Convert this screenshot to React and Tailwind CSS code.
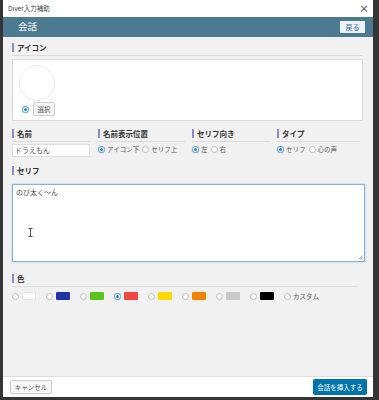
import React from 'react';

const FONT = { fontFamily: '"Noto Sans CJK JP", "Noto Sans", sans-serif' };

const Label = ({ children, className = '' }) => (
    <div className={`border-b border-[#dcdcdc] pb-[3px] ${className}`}>
        <div className="flex items-center gap-[3px] text-[7.5px] font-bold leading-none text-[#333]">
            <span className="block h-[9px] w-[2px] bg-[#8c8cc4]" />
            <span>{children}</span>
        </div>
    </div>
);

const Radio = ({ checked = false }) => (
    <span className={`flex h-[7px] w-[7px] shrink-0 items-center justify-center rounded-full border bg-white ${checked ? 'border-[#7aa7c7] shadow-[0_0_1px_#5b9dd9]' : 'border-[#bbb]'}`}>
        {checked && <span className="block h-[3px] w-[3px] rounded-full bg-[#1e8cbe]" />}
    </span>
);

const RadioText = ({ checked, children }) => (
    <span className="flex items-center gap-[2px] whitespace-nowrap">
        <Radio checked={checked} />
        <span className="text-[6.5px] leading-none text-[#555]">{children}</span>
    </span>
);

const SWATCHES = [
    { c: 'bg-white border border-[#e3e3e3]' },
    { c: 'bg-[#1d35a6]' },
    { c: 'bg-[#5bc21a]' },
    { c: 'bg-[#f0463c]', checked: true },
    { c: 'bg-[#ffd800]' },
    { c: 'bg-[#f18200]' },
    { c: 'bg-[#c9c9c9]' },
    { c: 'bg-black' },
];

export default function App() {
    return (
        <div className="flex h-[400px] w-[379px] bg-[#353535] pb-[3px] pl-[3px] pr-[6px]" style={FONT}>
            <div className="flex flex-1 flex-col overflow-hidden bg-[#f1f1f1]">
                {/* title bar */}
                <div className="flex h-[17px] shrink-0 items-center justify-between bg-white pl-[5px] pr-[4px]">
                    <span className="text-[6.5px] leading-none text-[#444]">Diver入力補助</span>
                    <span className="text-[10px] font-bold leading-none text-[#666]">×</span>
                </div>
                {/* header */}
                <div className="flex h-[20px] shrink-0 items-center justify-between bg-[#4b7a91] pl-[15px] pr-[8px]">
                    <span className="text-[9.5px] leading-none text-white">会話</span>
                    <span className="flex h-[12px] w-[25px] items-center justify-center bg-[#eef2f5] text-[7px] leading-none text-[#2f6e98]">戻る</span>
                </div>

                {/* content */}
                <div className="flex flex-1 flex-col pl-[9px] pr-[8px] pt-[6px]">
                    <Label className="mr-[2px]">アイコン</Label>
                    <div className="mr-[2px] mt-[3px] flex h-[62px] flex-col border border-[#dcdcdc] bg-white pl-[6px] pt-[5px]">
                        <div className="h-[36px] w-[36px] rounded-full border border-[#e8e8e8]" />
                        <div className="mt-[1px] flex items-center gap-[4px] pl-[3px]">
                            <Radio checked />
                            <span className="flex h-[14px] w-[22px] items-center justify-center rounded-[2px] border border-[#ccc] bg-[#f7f7f7] text-[6.5px] leading-none text-[#555]">選択</span>
                        </div>
                    </div>

                    <div className="mt-[8px] grid grid-cols-[79px_87px_78px_1fr] gap-x-[7px] pr-[5px]">
                        <div>
                            <Label>名前</Label>
                            <div className="mt-[2px] flex h-[13px] w-[78px] items-center border border-[#ddd] bg-white pl-[2px] text-[7px] leading-none text-[#555]">ドラえもん</div>
                        </div>
                        <div>
                            <Label>名前表示位置</Label>
                            <div className="mt-[4px] flex items-center gap-[3px]">
                                <RadioText checked>アイコン下</RadioText>
                                <RadioText>セリフ上</RadioText>
                            </div>
                        </div>
                        <div>
                            <Label>セリフ向き</Label>
                            <div className="mt-[4px] flex items-center gap-[3px]">
                                <RadioText checked>左</RadioText>
                                <RadioText>右</RadioText>
                            </div>
                        </div>
                        <div>
                            <Label>タイプ</Label>
                            <div className="mt-[4px] flex items-center gap-[3px]">
                                <RadioText checked>セリフ</RadioText>
                                <RadioText>心の声</RadioText>
                            </div>
                        </div>
                    </div>

                    <Label className="mt-[9px] border-b-0 pb-0">セリフ</Label>
                    <div className="relative mt-[6px] h-[78px] border border-[#86b3d3] bg-white px-[3px] pt-[3px] shadow-[0_0_2px_#a9cde6]">
                        <span className="block text-[7px] leading-[9px] text-[#444]">のび太く〜ん</span>
                        <svg className="absolute left-[15px] top-[43px]" width="5" height="9" viewBox="0 0 5 9">
                            <path d="M0.5 0.5h4M2.5 0.5v8M0.5 8.5h4" stroke="#555" strokeWidth="1" fill="none" />
                        </svg>
                        <svg className="absolute bottom-[1px] right-[1px]" width="5" height="5" viewBox="0 0 5 5">
                            <path d="M4.5 0.5L0.5 4.5M4.5 2.5L2.5 4.5" stroke="#999" strokeWidth="0.8" />
                        </svg>
                    </div>

                    <Label className="mr-[8px] mt-[12px]">色</Label>
                    <div className="mt-[5px] flex items-center">
                        {SWATCHES.map((s, i) => (
                            <span key={i} className="mr-[10px] flex items-center gap-[3px]">
                                <Radio checked={s.checked} />
                                <span className={`block h-[8px] w-[14px] rounded-[1px] ${s.c}`} />
                            </span>
                        ))}
                        <RadioText>カスタム</RadioText>
                    </div>
                </div>

                {/* footer */}
                <div className="flex h-[21px] shrink-0 items-center justify-between border-t border-[#dddddd] bg-white pl-[7px] pr-[6px]">
                    <span className="flex h-[14px] w-[42px] items-center justify-center rounded-[2px] border border-[#ccc] bg-[#f7f7f7] text-[6.5px] leading-none text-[#555]">キャンセル</span>
                    <span className="flex h-[16px] w-[54px] items-center justify-center rounded-[2px] bg-[#0073aa] text-[6.5px] leading-none text-white">会話を挿入する</span>
                </div>
            </div>
        </div>
    );
}
